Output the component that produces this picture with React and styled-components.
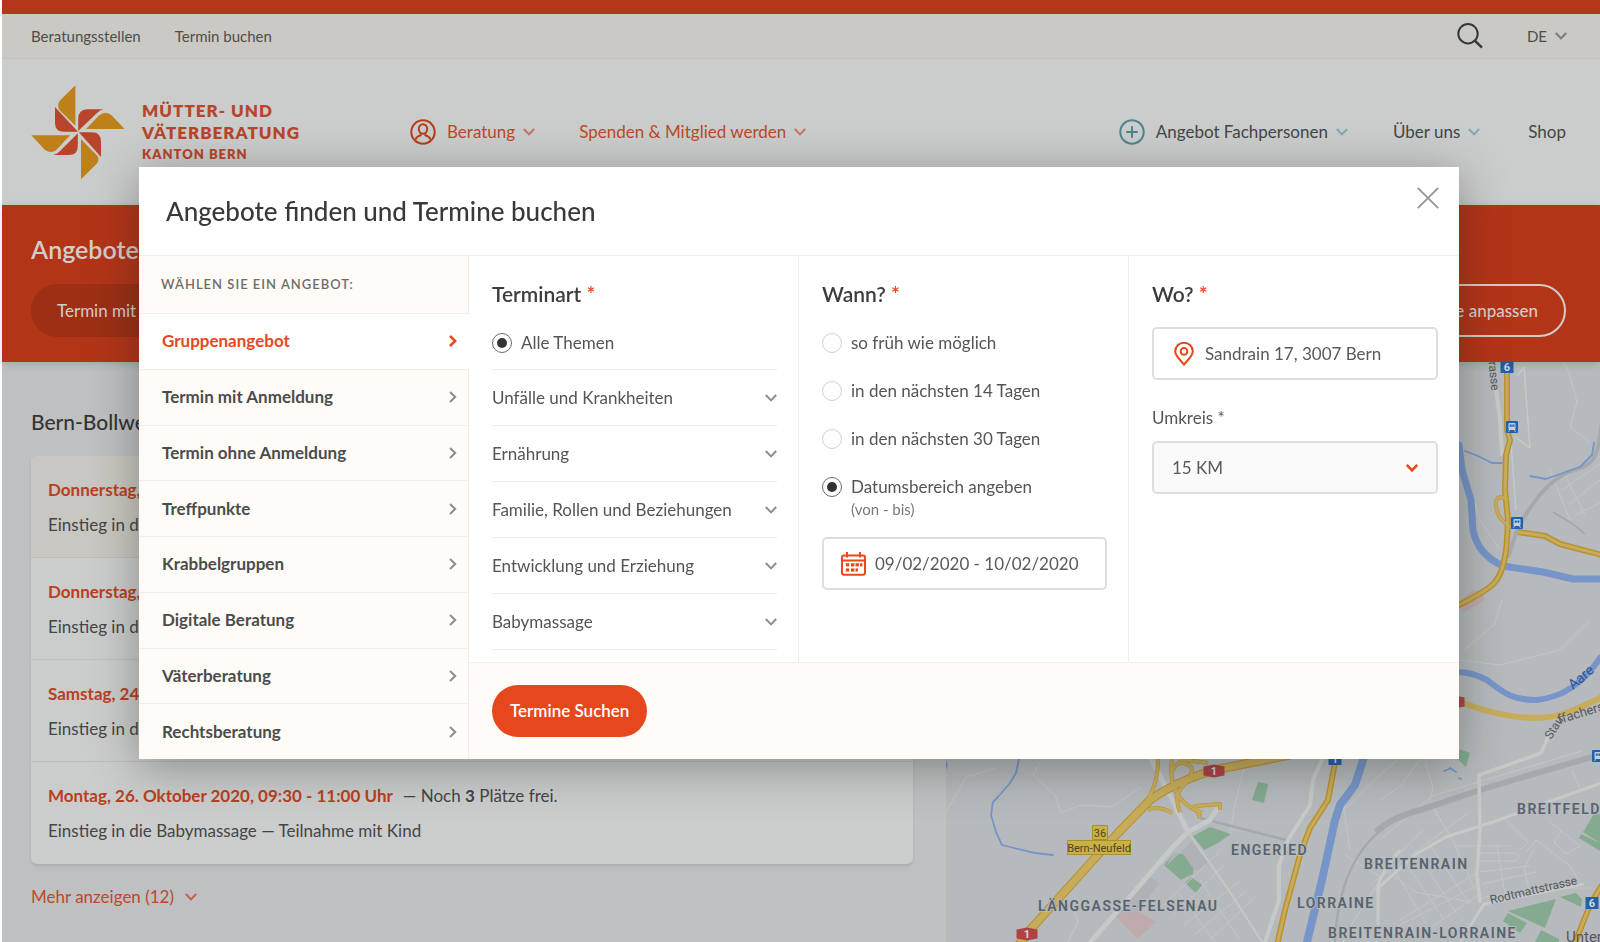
import React from "react";
import styled, { createGlobalStyle } from "styled-components";

const font = `Lato, "Liberation Sans", sans-serif`;

const GlobalStyle = createGlobalStyle`
  *, *::before, *::after { box-sizing: border-box; }
  body {
    margin: 0;
    overflow: hidden;
    font-family: ${font};
    font-size: 17px;
    line-height: 24px;
    color: #434546;
    background: #fff;
  }
  button, input, select { font: inherit; color: inherit; }
  h1, h2, h3, p, ul { margin: 0; padding: 0; }
  ul { list-style: none; }
  a { color: inherit; text-decoration: none; }
`;

/* ---------- icons ---------- */

const Stroke = styled.svg`
  display: block;
  flex: none;
  fill: none;
  stroke: ${(p) => p.$color || "currentColor"};
  stroke-width: ${(p) => p.$weight || 2};
`;

const ChevronDown = ({ color, weight }) => (
  <Stroke width="12" height="8" viewBox="0 0 12 8" $color={color} $weight={weight} aria-hidden="true">
    <path d="M.8 1 6 6.4 11.2 1" />
  </Stroke>
);

const ChevronRight = ({ color, weight }) => (
  <Stroke width="8" height="12" viewBox="0 0 8 12" $color={color} $weight={weight} aria-hidden="true">
    <path d="M1 1 6.2 6 1 11" />
  </Stroke>
);

const SearchIcon = () => (
  <Stroke width="26" height="26" viewBox="0 0 26 26" $color="#34383a" $weight={2} aria-hidden="true">
    <circle cx="11" cy="10.7" r="9.7" />
    <path d="m17.8 17.6 7.2 7" strokeWidth="2.4" />
  </Stroke>
);

const PersonIcon = () => (
  <Stroke width="26" height="26" viewBox="0 0 26 26" $color="#b83c1c" $weight={2} aria-hidden="true">
    <circle cx="13" cy="13" r="11.7" />
    <ellipse cx="13" cy="10" rx="4.2" ry="4.8" />
    <path d="M10.6 14v2.2c-2.6.9-4.6 2-5 4.4M15.4 14v2.2c2.6.9 4.6 2 5 4.4" />
  </Stroke>
);

const PlusIcon = () => (
  <Stroke width="26" height="26" viewBox="0 0 26 26" $color="#4e8390" $weight={2} aria-hidden="true">
    <circle cx="13" cy="13" r="11.7" />
    <path d="M13 7.2v11.6M7.2 13h11.6" />
  </Stroke>
);

const CloseIcon = () => (
  <Stroke width="22" height="22" viewBox="0 0 22 22" $color="#969696" $weight={1.8} aria-hidden="true">
    <path d="m.8.8 20.4 20.4M21.2.8.8 21.2" />
  </Stroke>
);

const PinIcon = () => (
  <Stroke width="20" height="24" viewBox="0 0 20 24" $color="#e8481c" $weight={2} aria-hidden="true">
    <path d="M10 22.6C7 18.4 1.2 14 1.2 9.4a8.8 8.6 0 0 1 17.6 0C18.8 14 13 18.4 10 22.6Z" />
    <circle cx="10" cy="9.4" r="3.3" />
  </Stroke>
);

const CalendarIcon = () => (
  <svg width="25" height="24" viewBox="0 0 25 24" fill="none" stroke="#e8481c" strokeWidth="2" aria-hidden="true">
    <rect x="1" y="3.4" width="23" height="19.4" rx="2" />
    <path d="M1 8.6h23M6 0v5.5M19 0v5.5" />
    <g fill="#e8481c" stroke="none">
      <rect x="10" y="11.2" width="3.4" height="3.2" />
      <rect x="14.5" y="11.2" width="3.4" height="3.2" />
      <rect x="19" y="11.2" width="2.4" height="3.2" />
      <rect x="4.8" y="16.4" width="3.4" height="3.2" />
      <rect x="4.8" y="11.2" width="3.4" height="3.2" />
      <rect x="10" y="16.4" width="3.4" height="3.2" />
      <rect x="14.5" y="16.4" width="2.4" height="3.2" />
    </g>
  </svg>
);

const Pinwheel = () => (
  <svg width="94" height="95" viewBox="0 0 94 95" aria-hidden="true">
    <g fill="#be8019">
      <path d="M44.4.3V40.7L28.5 25Q25.5 20 29 15.5Z" />
      <path d="M55 44H93.7L80 29.8Q74 25.3 68 30.5Z" />
      <path d="M50 54.3V94.3L65.5 79Q69 74.5 66 70.5Z" />
      <path d="M.3 50.3H39.2L25 65.3Q20 69 14 65Z" />
    </g>
    <g fill="#b8452a">
      <path d="M24 22 47 46.7H33Q24 46.7 24 38Z" />
      <path d="M72.3 24.3H57Q47.2 24.3 47.2 34V46L66 28Q69 25 72.3 24.3Z" />
      <path d="M47.8 47.3H61Q70 47.3 70 57V72Z" />
      <path d="M46.8 48.3V61Q46.8 70 38 70H22.4Q26 69 28 67Z" />
    </g>
  </svg>
);

/* ---------- page behind the dialog ---------- */

const Page = styled.div`
  min-height: 100vh;
  display: flex;
  flex-direction: column;
  border-left: 2px solid #fff;
  background: #bfc0c2;
`;

const TopStripe = styled.div`
  height: 14px;
  background: #b53719;
`;

const UtilityBar = styled.div`
  display: flex;
  align-items: center;
  justify-content: space-between;
  height: 45px;
  padding: 0 33px 0 29px;
  background: #cbc9c3;
  border-bottom: 1px solid #c1c0bc;
  font-size: 15px;
  color: #4b4d4e;
`;

const UtilityLinks = styled.nav`
  display: flex;
  align-items: center;
  gap: ${(p) => p.$gap}px;
`;

const PlainButton = styled.button`
  display: inline-flex;
  align-items: center;
  gap: 8px;
  padding: 0;
  border: 0;
  background: none;
  cursor: pointer;
`;

const Header = styled.header`
  display: flex;
  align-items: center;
  height: 146px;
  padding: 0 34px 0 29px;
  background: #cbcdcc;
`;

const Brand = styled.a`
  display: flex;
  align-items: center;
  gap: 17px;
  width: 379px;
`;

const BrandName = styled.span`
  display: block;
  font-size: 17px;
  line-height: 22px;
  font-weight: 800;
  letter-spacing: 1px;
  color: #b8452a;
`;

const BrandRegion = styled.span`
  display: block;
  font-size: 13px;
  line-height: 20px;
`;

const Nav = styled.nav`
  display: flex;
  flex: 1;
  align-items: center;
  gap: 44px;
`;

const NavLink = styled.a`
  display: inline-flex;
  align-items: center;
  gap: 8px;
  color: ${(p) => (p.$accent ? "#bd482b" : "#434647")};
  white-space: nowrap;

  > svg:first-child {
    margin-right: 3px;
  }
`;

const NavEnd = styled.div`
  display: flex;
  align-items: center;
  gap: 45px;
  margin-left: auto;
`;

const Hero = styled.section`
  position: relative;
  padding: 28px 34px 25px 29px;
  background: #b33518;
  color: #d3cdca;
  box-shadow: 0 2px 8px rgba(0, 0, 0, 0.14);
`;

const HeroTitle = styled.h1`
  font-size: 25px;
  line-height: 32px;
  font-weight: 600;
`;

const HeroRow = styled.div`
  display: flex;
  justify-content: space-between;
  margin-top: 19px;
`;

const Pill = styled.button`
  height: 53px;
  padding: 0 26px;
  border-radius: 27px;
  border: ${(p) => (p.$outline ? "2px solid #d3cdca" : "0")};
  background: ${(p) => (p.$outline ? "none" : "#9d2f15")};
  font-weight: ${(p) => (p.$outline ? 500 : 400)};
`;

const Content = styled.main`
  display: grid;
  grid-template-columns: minmax(0, 944fr) minmax(0, 654fr);
  flex: 1;
`;

const Results = styled.section`
  padding: 46px 33px 32px 29px;
`;

const PlaceTitle = styled.h2`
  font-size: 21px;
  line-height: 28px;
  font-weight: 500;
  color: #323536;
`;

const EventList = styled.ul`
  margin-top: 20px;
  border-radius: 6px;
  overflow: hidden;
  background: #cbcdcc;
  box-shadow: 0 2px 3px rgba(0, 0, 0, 0.1);
`;

const EventItem = styled.li`
  display: grid;
  gap: 11px;
  padding: 22px 17px 20px;
  border-bottom: 1px solid #bcbdbd;
  background: ${(p) => (p.$highlight ? "#c9c7c1" : "none")};

  &:last-child {
    border-bottom: 0;
    padding-bottom: 21px;
  }
`;

const EventDate = styled.span`
  margin-right: 10px;
  font-weight: 700;
  color: #b9401f;
`;

const MoreButton = styled(PlainButton)`
  margin-top: 21px;
  gap: 11px;
  color: #bd482b;
`;

/* ---------- map ---------- */

const MapFrame = styled.aside`
  overflow: hidden;
  background: #b6babd;

  svg {
    display: block;
    width: 100%;
    height: 580px;
  }
`;

const District = styled.text`
  font: 600 14px Roboto, sans-serif;
  letter-spacing: 1.5px;
  fill: #56626e;
  stroke: #b6babd;
  stroke-width: 2px;
  paint-order: stroke;
`;

const Street = styled.text`
  font: ${(p) => p.$size || 12}px Roboto, sans-serif;
  fill: ${(p) => p.$color || "#54585c"};
`;

const Station = ({ x, y }) => (
  <g transform={`translate(${x} ${y})`}>
    <rect x="-6" y="-6" width="12" height="12" rx="1" fill="#1e62b4" />
    <rect x="-3.5" y="-4" width="7" height="7" rx="1" fill="#c3d0de" />
    <path d="M-2.3-2.5h2v2.3h-2zM.4-2.5h2v2.3h-2z" fill="#1e62b4" />
    <path d="m-2.5 3-1 1.8m6-1.8 1 1.8" stroke="#c3d0de" />
  </g>
);

const RouteShield = ({ x, y, label, red }) => (
  <g transform={`translate(${x} ${y})`}>
    {red ? (
      <path d="M-10.5-4.5 0-6.5 10.5-4.5v9L0 6.5-10.5 4.5Z" fill="#b04246" />
    ) : (
      <rect x="-6.5" y="-6" width="13" height="12" fill="#2360a8" />
    )}
    <text y="4" textAnchor="middle" fill="#d5dade" fontSize="11" fontWeight="700" fontFamily="Roboto">
      {label}
    </text>
  </g>
);

const CityMap = () => (
  <svg viewBox="946 362 654 580" preserveAspectRatio="xMaxYMin slice" role="img" aria-label="Karte von Bern" fill="none">
    <g fill="#84ab90">
      <path d="m1258 782 10 2-4 19-12-3zM1193 836l17-9 21 7-13 9-14 7zM1164 865l10-12 9 1 11 13-1 7-12 6zM1185 883l6-6 11 8-6 8zM1455 757l5-8 10 4-4 14zM1583 832l11-18h6v29zM1579 838l2-4 19 9v8zM1508 911l48-12-11 29zM1508 913l19 10-7 10-17-12zM1541 930l18 9v3h-24zM1560 897l16-4 6 6-1 8z" />
    </g>
    <g fill="#bfaaac">
      <path d="m1115 915 10-10 15 7 16 10-19 17zM1461 600l12-10 9 1 3 9-22 13z" />
    </g>
    <g fill="#b0b1b5">
      <path d="m1166 866 26-24 17 22-14 7-12-17-9-2zM1110 915l35-40 15 8-25 30z" />
    </g>

    {/* minor streets */}
    <g stroke="#c3c6c8" strokeWidth="1">
      <path d="M1040 762l-7 13 22 20 6 18 20-8 30 2 30-20M946 812l20-35 30-9M1246 759l-12 50-4 25M1068 942l10-20-8-20M1310 942l10-40 12-70 30-60M1174 915l50-50M1164 905l58-56M1184 925l56-44M1194 935l52-44M1210 940l44-42M1180 895l35 47M1200 880l40 60M1350 850l-6-40 30-30 26-22M1345 855l36 22-3 30M1343 942l10-20 40-62 30-30M1400 855l44 64M1390 863l36 60M1412 846l45 68M1425 838l45 66M1434 810l18 28 23 52M1385 870l30 22 56 10M1370 885l98-72M1400 920l78-48M1390 930l90-46M1420 935l58-40M1382 838l50-42 90-27 60-18M1380 800l20-14 20-26M1425 762l8 26-3 14 12 20M1504 818l24 24-8 8M1526 852l10-12 34 26 12 20M1534 850l-10 18 6 26M1550 822l10 8 20 16-14 8-12-12 8-12M1572 770l8 18M1455 846h56M1480 853h35q8 3 0 8h-35M1480 872l50-6M1482 884l54-12M1497 845l8 50M1480 898l60-10 50 0M1468 480l12 40 20 30M1560 480l40-24M1562 490l38-26M1568 505l32-25M1575 515l25-12M1550 470l20 50M1565 475l20 40M1577 402l-8-30-6-10M1577 402l-7 25 20 15M1460 660l40 5 60-15 30-30M1502 600l-8 25-30 25" />
    </g>
    <path d="M1553 512l20 12 12 10" stroke="#a2a6a9" strokeWidth="1.5" />

    {/* railway lines */}
    <g stroke="#a4a9ac">
      <path d="M1602 420c-4 40-8 44-28 50s-40 28-57 60l-9 28" strokeWidth="4" />
      <path d="M1376 832q14-14 44-22l60-20 40-12 82-24" strokeWidth="6" />
      <path d="M1400 818c-40 20-62 60-65 124M1200 818l35 9 55 14" strokeWidth="2.5" />
    </g>

    {/* main streets */}
    <g stroke="#c6c9ca" strokeWidth="4" strokeLinejoin="round">
      <path d="M1150 757 1170 795 1188 832 1172 848 1088 945M1188 832l22-12 8-12" strokeWidth="5" />
      <path d="M1323 757l-10 23-3 25-22 35-9 25v35l-15 45M1496 388l4 32 2 36" />
      <path d="M1188 832l42 60 32 50M1510 430l6 80M1517 376l7-9 6 81-16-12" strokeWidth="1.5" />
      <path d="M1550 733l-9 20-62 22 1 55-3 45 3 28" strokeWidth="3.5" />
      <path d="M1376 890l40-36 30-17 50-16 60-22 46-16M1378 925v-35q0-15 22-40M1460 942l24-38 100-20" strokeWidth="3" />
    </g>

    {/* water */}
    <g stroke="#7795c8" strokeLinecap="round" strokeLinejoin="round">
      <path d="M945 759l2 6-2 6M1019 759l-3 14-6 10-12 14-5 5-2 13 5 17 6 13 8 2 8 2 17 4 18 2M1465 451l13 5 14 7h10M1530 476l16 3 14-5 20-7 12-12 2-12M1444 771l5-2M1450 768l6 4M1459 778l2 1" strokeWidth="1.8" />
      <path d="M1364 757l-9 28-15 20-5 15-13 60-16 66" strokeWidth="8" />
      <path d="M1459 445l3 25 9 30 2 30q5 25 30 36l40 6 30 7h30" strokeWidth="7" />
      <path d="M1457 672q15 0 30 8c16 12 24 20 50 20 26-3 45-16 63-42" strokeWidth="6" />
    </g>

    {/* motorways */}
    <g strokeLinejoin="round">
      <g stroke="#b9922d">
        <path d="M1018 946 1030 930 1095 858 1118 833 1150 800Q1175 782 1214 770L1290 755" strokeWidth="9" />
        <path d="M1507 366v64l3 10-4 15-1 35 3 30-1 20q-2 30-12 42-6 8-38 24M1518 532l27 4 15 8 42 11M1602 885l-12 20-16 40M1336 757l-8 43-18 28-10 27-15 55-8 35" strokeWidth="6" />
        <path d="M1508 500q-13-8-12 7 2 12 14 20M1148 810q10-5 24 3M1158 759q0 30-16 48M1172 759c-4 25 5 45 30 54M1180 812c-10-25 10-25 12-42 0-8-22-14-20 10M1200 818l-5-12 25-2v6M1178 759l30 4" strokeWidth="4" />
      </g>
      <g stroke="#c7ac5c">
        <path d="M1018 946 1030 930 1095 858 1118 833 1150 800Q1175 782 1214 770L1290 755" strokeWidth="7" />
        <path d="M1463 703q40 15 72 15c25 0 40-8 67-21" strokeWidth="6" />
        <path d="M1507 366v64l3 10-4 15-1 35 3 30-1 20q-2 30-12 42-6 8-38 24M1518 532l27 4 15 8 42 11M1602 885l-12 20-16 40M1336 757l-8 43-18 28-10 27-15 55-8 35M1508 500q-13-8-12 7 2 12 14 20M1148 810q10-5 24 3M1158 759q0 30-16 48M1172 759c-4 25 5 45 30 54M1180 812c-10-25 10-25 12-42 0-8-22-14-20 10M1200 818l-5-12 25-2v6M1178 759l30 4" strokeWidth="3" />
      </g>
    </g>

    <RouteShield x={1214} y={771} label="1" red />
    <RouteShield x={1027} y={934} label="1" red />
    <RouteShield x={1454} y={702} label="1" red />
    <RouteShield x={1335} y={759} label="1" />
    <RouteShield x={1507} y={367} label="6" />
    <RouteShield x={1592} y={903} label="6" />
    <Station x={1512} y={427} />
    <Station x={1517} y={523} />
    <Station x={1598} y={756} />

    <g fill="#cbb043" stroke="#a88f2f">
      <path d="M1092.5 825.5h15v14h-15zM1067.5 840.5h63v14h-63z" />
    </g>
    <Street x="1100" y="837" textAnchor="middle" $size={11} $color="#4d4625">36</Street>
    <Street x="1099" y="852" textAnchor="middle" $size={11} $color="#4d4625">Bern-Neufeld</Street>

    <District x="1231" y="855">ENGERIED</District>
    <District x="1038" y="911">LÄNGGASSE-FELSENAU</District>
    <District x="1297" y="908">LORRAINE</District>
    <District x="1364" y="869">BREITENRAIN</District>
    <District x="1328" y="938">BREITENRAIN-LORRAINE</District>
    <District x="1517" y="814">BREITFELD</District>
    <Street transform="translate(1491 904) rotate(-13)">Rodtmattstrasse</Street>
    <Street transform="translate(1551 740) rotate(-58)">Stau</Street>
    <Street transform="translate(1559 724) rotate(-17)" $size={13}>ffacherst</Street>
    <Street transform="translate(1573 690) rotate(-40)" $size={14} $color="#2c5496">Aare</Street>
    <Street transform="translate(1488 358) rotate(84)">trasse</Street>
    <Street x="1566" y="942" $size={15}>Unter</Street>
  </svg>
);

/* ---------- dialog ---------- */

const Overlay = styled.div`
  position: fixed;
  inset: 0;
  padding: 167px 141px 0 139px;
`;

const Dialog = styled.section`
  display: flex;
  flex-direction: column;
  min-height: 592px;
  background: #fff;
  box-shadow: 0 8px 44px rgba(20, 24, 20, 0.36);
`;

const DialogHead = styled.header`
  display: flex;
  align-items: flex-start;
  justify-content: space-between;
  min-height: 89px;
  padding: 20px 20px 0 27px;
  border-bottom: 1px solid #efefef;
`;

const DialogTitle = styled.h2`
  margin-top: 8px;
  font-size: 26px;
  line-height: 32px;
  font-weight: 500;
  color: #38393a;
`;

const DialogBody = styled.div`
  display: grid;
  grid-template-columns: repeat(4, minmax(0, 1fr));
  grid-template-rows: 1fr 97px;
  flex: 1;
`;

const Sidebar = styled.nav`
  grid-row: 1 / 3;
  display: flex;
  flex-direction: column;
  background: #fffcf7;
  border-right: 1px solid #efeeec;
`;

const SidebarLabel = styled.h3`
  height: 57px;
  padding: 16px 22px;
  font-size: 13px;
  font-weight: 600;
  letter-spacing: 1px;
  text-transform: uppercase;
  color: #6c6c6c;
`;

const OfferList = styled.ul`
  display: flex;
  flex-direction: column;
  flex: 1;
  margin-right: -1px;
`;

const OfferItem = styled.li`
  display: flex;
  flex: 1;
  border-top: 1px solid #eeeeed;
  background: ${(p) => (p.$active ? "#fff" : "none")};
`;

const OfferButton = styled(PlainButton)`
  flex: 1;
  justify-content: space-between;
  padding: 0 12px 0 23px;
  font-weight: 700;
  color: ${(p) => (p.$active ? "#e8481c" : "#4b4c4d")};
`;

const Column = styled.section`
  padding: 24px 21px 0 23px;
  border-right: 1px solid #efefef;

  &:last-of-type {
    border-right: 0;
  }
`;

const ColumnTitle = styled.h3`
  margin-bottom: 19px;
  font-size: 21px;
  line-height: 28px;
  font-weight: 600;
  color: #3c3d3e;
`;

const Required = styled.span`
  color: #e8481c;
`;

const RadioList = styled.div`
  display: grid;
  gap: 24px;
  padding-top: 4px;
`;

const RadioLabel = styled.label`
  display: grid;
  grid-template-columns: 20px 1fr;
  align-items: center;
  column-gap: 9px;
  color: #555;
`;

const Radio = styled.input.attrs({ type: "radio" })`
  appearance: none;
  display: grid;
  place-items: center;
  width: 20px;
  height: 20px;
  margin: 0;
  border: 1px solid #cfcfcf;
  border-radius: 50%;
  background: #fff;

  &:checked {
    border-color: #6a6a6a;
  }
  &:checked::before {
    content: "";
    width: 10px;
    height: 10px;
    border-radius: 50%;
    background: #333;
  }
`;

const RadioHint = styled.small`
  grid-column: 2;
  font-size: 15px;
  line-height: 20px;
  color: #7a7a7a;
`;

const TopicList = styled.ul`
  margin-top: 14px;
  border-top: 1px solid #ececec;
`;

const TopicButton = styled(PlainButton)`
  width: 100%;
  height: 56px;
  justify-content: space-between;
  border-bottom: 1px solid #ececec;
  color: #555;
`;

const Field = styled.label`
  display: flex;
  align-items: center;
  gap: ${(p) => p.$gap || 0}px;
  height: 53px;
  margin-top: ${(p) => p.$top || 0}px;
  padding: 0 ${(p) => p.$pad}px;
  border: 2px solid #dedede;
  border-radius: 5px;
  background: ${(p) => (p.$muted ? "#fafafa" : "#fff")};
  color: #5a5a5a;
`;

const TextInput = styled.input`
  flex: 1;
  min-width: 0;
  padding: 0;
  border: 0;
  outline: 0;
  background: none;
`;

const Select = styled.select`
  appearance: none;
  flex: 1;
  padding: 0;
  border: 0;
  background: none;
`;

const FieldLabel = styled.label`
  display: block;
  margin: 26px 0 11px;
  color: #555;
`;

const DialogFoot = styled.footer`
  grid-column: 2 / 5;
  padding: 22px 23px;
  border-top: 1px solid #f0efec;
  background: #fffcf7;
`;

const SubmitButton = styled.button`
  height: 52px;
  padding: 0 18px;
  border: 0;
  border-radius: 26px;
  background: #e6471d;
  color: #fff;
  font-weight: 600;
`;

/* ---------- data ---------- */

const offers = [
  "Gruppenangebot",
  "Termin mit Anmeldung",
  "Termin ohne Anmeldung",
  "Treffpunkte",
  "Krabbelgruppen",
  "Digitale Beratung",
  "Väterberatung",
  "Rechtsberatung",
];

const topics = [
  "Unfälle und Krankheiten",
  "Ernährung",
  "Familie, Rollen und Beziehungen",
  "Entwicklung und Erziehung",
  "Babymassage",
];

const periods = ["so früh wie möglich", "in den nächsten 14 Tagen", "in den nächsten 30 Tagen"];

const events = [
  "Donnerstag, 22. Oktober 2020, 09:30 - 11:00 Uhr",
  "Donnerstag, 22. Oktober 2020, 14:00 - 15:30 Uhr",
  "Samstag, 24. Oktober 2020, 09:30 - 11:00 Uhr",
  "Montag, 26. Oktober 2020, 09:30 - 11:00 Uhr",
];

export default function App() {
  return (
    <>
      <GlobalStyle />
      <Page>
        <TopStripe />
        <UtilityBar>
          <UtilityLinks $gap={34} aria-label="Schnellzugriff">
            <a href="#beratungsstellen">Beratungsstellen</a>
            <a href="#termin">Termin buchen</a>
          </UtilityLinks>
          <UtilityLinks as="div" $gap={44}>
            <PlainButton aria-label="Suche"><SearchIcon /></PlainButton>
            <PlainButton>DE <ChevronDown color="#77797a" weight={2} /></PlainButton>
          </UtilityLinks>
        </UtilityBar>

        <Header>
          <Brand href="#start">
            <Pinwheel />
            <BrandName>
              MÜTTER- UND<br />VÄTERBERATUNG
              <BrandRegion>KANTON BERN</BrandRegion>
            </BrandName>
          </Brand>
          <Nav aria-label="Hauptnavigation">
            <NavLink href="#beratung" $accent>
              <PersonIcon />Beratung<ChevronDown color="#c4745f" weight={2} />
            </NavLink>
            <NavLink href="#spenden" $accent>
              Spenden &amp; Mitglied werden<ChevronDown color="#c4745f" weight={2} />
            </NavLink>
            <NavEnd>
              <NavLink href="#fachpersonen">
                <PlusIcon />Angebot Fachpersonen<ChevronDown color="#84a8b0" weight={2} />
              </NavLink>
              <NavLink href="#ueber-uns">
                Über uns<ChevronDown color="#84a8b0" weight={2} />
              </NavLink>
              <NavLink href="#shop">Shop</NavLink>
            </NavEnd>
          </Nav>
        </Header>

        <Hero>
          <HeroTitle>Angebote in Ihrer Nähe</HeroTitle>
          <HeroRow>
            <Pill>Termin mit Anmeldung</Pill>
            <Pill $outline>Suche anpassen</Pill>
          </HeroRow>
        </Hero>

        <Content>
          <Results>
            <PlaceTitle>Bern-Bollwerk</PlaceTitle>
            <EventList>
              {events.map((date, i) => (
                <EventItem key={date} $highlight={i === 0}>
                  <p>
                    <EventDate>{date}</EventDate>— Noch <b>3</b> Plätze frei.
                  </p>
                  <p>Einstieg in die Babymassage — Teilnahme mit Kind</p>
                </EventItem>
              ))}
            </EventList>
            <MoreButton>
              Mehr anzeigen (12) <ChevronDown color="#c0604a" weight={2} />
            </MoreButton>
          </Results>
          <MapFrame>
            <CityMap />
          </MapFrame>
        </Content>
      </Page>

      <Overlay>
        <Dialog role="dialog" aria-modal="true" aria-labelledby="dialog-title">
          <DialogHead>
            <DialogTitle id="dialog-title">Angebote finden und Termine buchen</DialogTitle>
            <PlainButton aria-label="Schliessen"><CloseIcon /></PlainButton>
          </DialogHead>
          <DialogBody>
            <Sidebar aria-label="Angebote">
              <SidebarLabel>Wählen Sie ein Angebot:</SidebarLabel>
              <OfferList>
                {offers.map((offer, i) => (
                  <OfferItem key={offer} $active={i === 0}>
                    <OfferButton $active={i === 0}>
                      {offer}
                      <ChevronRight color={i === 0 ? "#e8481c" : "#8d8d8d"} weight={i === 0 ? 2.6 : 2} />
                    </OfferButton>
                  </OfferItem>
                ))}
              </OfferList>
            </Sidebar>

            <Column role="radiogroup" aria-labelledby="topic-title">
              <ColumnTitle id="topic-title">Terminart <Required>*</Required></ColumnTitle>
              <RadioList>
                <RadioLabel>
                  <Radio name="topic" defaultChecked />
                  Alle Themen
                </RadioLabel>
              </RadioList>
              <TopicList>
                {topics.map((topic) => (
                  <li key={topic}>
                    <TopicButton aria-expanded="false">
                      {topic}
                      <ChevronDown color="#8d8d8d" weight={2} />
                    </TopicButton>
                  </li>
                ))}
              </TopicList>
            </Column>

            <Column role="radiogroup" aria-labelledby="when-title">
              <ColumnTitle id="when-title">Wann? <Required>*</Required></ColumnTitle>
              <RadioList>
                {periods.map((period) => (
                  <RadioLabel key={period}>
                    <Radio name="when" />
                    {period}
                  </RadioLabel>
                ))}
                <RadioLabel>
                  <Radio name="when" defaultChecked />
                  Datumsbereich angeben
                  <RadioHint>(von - bis)</RadioHint>
                </RadioLabel>
              </RadioList>
              <Field $pad={17} $gap={9} $top={18}>
                <CalendarIcon />
                <TextInput aria-label="Datumsbereich" defaultValue="09/02/2020 - 10/02/2020" />
              </Field>
            </Column>

            <Column>
              <ColumnTitle>Wo? <Required>*</Required></ColumnTitle>
              <Field $pad={20} $gap={11}>
                <PinIcon />
                <TextInput aria-label="Adresse" defaultValue="Sandrain 17, 3007 Bern" />
              </Field>
              <FieldLabel htmlFor="radius">Umkreis *</FieldLabel>
              <Field as="div" $pad={18} $muted>
                <Select id="radius" defaultValue="15 KM">
                  <option>5 KM</option>
                  <option>15 KM</option>
                  <option>30 KM</option>
                </Select>
                <ChevronDown color="#e8481c" weight={2.6} />
              </Field>
            </Column>

            <DialogFoot>
              <SubmitButton type="submit">Termine Suchen</SubmitButton>
            </DialogFoot>
          </DialogBody>
        </Dialog>
      </Overlay>
    </>
  );
}
